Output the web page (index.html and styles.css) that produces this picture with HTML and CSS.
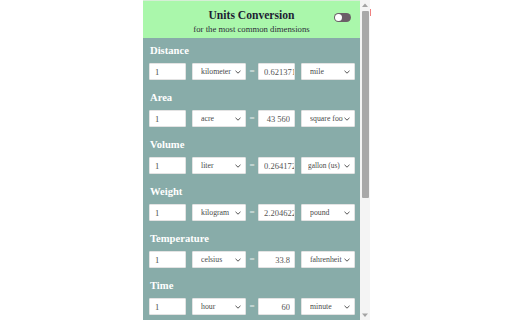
FILE: index.html
```html
<!DOCTYPE html>
<html>
<head>
<meta charset="utf-8">
<link rel="stylesheet" href="styles.css">
</head>
<body>
<div class="frame">
  <div class="panel">
    <header class="head">
      <div class="titles">
        <div class="title">Units Conversion</div>
        <div class="sub">for the most common dimensions</div>
      </div>
      <span class="toggle"><span class="knob"></span></span>
    </header>

    <section class="sec">
      <div class="lbl">Distance</div>
      <div class="row">
        <input class="num" value="1">
        <select class="sel"><option>kilometer</option></select>
        <span class="eq">=</span>
        <input class="num res long" value="0.621371192">
        <select class="sel"><option>mile</option></select>
      </div>
    </section>

    <section class="sec">
      <div class="lbl">Area</div>
      <div class="row">
        <input class="num" value="1">
        <select class="sel"><option>acre</option></select>
        <span class="eq">=</span>
        <input class="num res" value="43 560">
        <select class="sel"><option>square foot</option></select>
      </div>
    </section>

    <section class="sec">
      <div class="lbl">Volume</div>
      <div class="row">
        <input class="num" value="1">
        <select class="sel"><option>liter</option></select>
        <span class="eq">=</span>
        <input class="num res long" value="0.264172052">
        <select class="sel wide"><option>gallon (us)</option></select>
      </div>
    </section>

    <section class="sec">
      <div class="lbl">Weight</div>
      <div class="row">
        <input class="num" value="1">
        <select class="sel"><option>kilogram</option></select>
        <span class="eq">=</span>
        <input class="num res long" value="2.204622622">
        <select class="sel"><option>pound</option></select>
      </div>
    </section>

    <section class="sec">
      <div class="lbl">Temperature</div>
      <div class="row">
        <input class="num" value="1">
        <select class="sel"><option>celsius</option></select>
        <span class="eq">=</span>
        <input class="num res" value="33.8">
        <select class="sel"><option>fahrenheit</option></select>
      </div>
    </section>

    <section class="sec">
      <div class="lbl">Time</div>
      <div class="row">
        <input class="num" value="1">
        <select class="sel"><option>hour</option></select>
        <span class="eq">=</span>
        <input class="num res" value="60">
        <select class="sel"><option>minute</option></select>
      </div>
    </section>
  </div>

  <div class="sbar">
    <svg class="arr" width="10" height="10" viewBox="0 0 10 10"><path d="M2 7 L5 3.5 L8 7 Z" fill="#a3a3a3"/></svg>
    <div class="track"><div class="thumb"></div></div>
    <svg class="arr" width="10" height="10" viewBox="0 0 10 10"><path d="M2 3.5 L5 7 L8 3.5 Z" fill="#a3a3a3"/></svg>
  </div>
  <div class="edge"><span class="redmark"></span></div>
</div>
</body>
</html>
```

FILE: styles.css
```css
html, body {
  margin: 0;
  padding: 0;
  background: #ffffff;
}
body {
  font-family: "Liberation Serif", "Times New Roman", serif;
  width: 512px;
  height: 320px;
  overflow: hidden;
}
.frame {
  display: flex;
  width: 230px;
  height: 320px;
  margin-left: 143px;
}
.panel {
  width: 217px;
  height: 320px;
  background: #88aca9;
  flex: none;
  overflow: hidden;
}
.head {
  height: 38px;
  background: #aaf7ab;
  display: flex;
  align-items: center;
  position: relative;
  box-sizing: border-box;
  border-top: 1px solid #d6eed6;
}
.titles {
  flex: 1;
  text-align: center;
  padding-top: 4px;
}
.title {
  font-weight: bold;
  font-size: 11.6px;
  line-height: 14px;
  color: #1d1d33;
}
.sub {
  font-size: 8.7px;
  line-height: 12px;
  color: #2c2c3a;
}
.toggle {
  position: absolute;
  right: 9px;
  top: 12px;
  width: 17px;
  height: 9px;
  border-radius: 5px;
  background: #6b5f67;
  display: flex;
  align-items: center;
  padding-left: 1px;
  box-sizing: border-box;
}
.knob {
  width: 7px;
  height: 7px;
  border-radius: 50%;
  background: #ffffff;
}
.sec {
  padding: 5px 6px 5px;
}
.lbl {
  font-weight: bold;
  font-size: 10.6px;
  line-height: 16px;
  color: #ffffff;
  padding-left: 1px;
}
.row {
  display: flex;
  align-items: center;
  margin-top: 4px;
  height: 17px;
}
.num {
  width: 37px;
  height: 17px;
  box-sizing: border-box;
  border: 1px solid #e3e3e3;
  border-radius: 1px;
  background: #ffffff;
  font-family: "Liberation Serif", "Times New Roman", serif;
  font-size: 8.5px;
  color: #4a4a4a;
  padding: 0 4px 0 5px;
  margin: 0;
  outline: none;
  flex: none;
}
.res {
  text-align: right;
  color: #555555;
  padding: 0 4px;
}
.res.long {
  text-align: left;
  padding: 0 0 0 5px;
}
.sel {
  appearance: none;
  -webkit-appearance: none;
  width: 54px;
  height: 17px;
  box-sizing: border-box;
  border: 1px solid #e3e3e3;
  border-radius: 1px;
  background: #ffffff url("data:image/svg+xml;utf8,<svg xmlns='http://www.w3.org/2000/svg' width='8' height='6' viewBox='0 0 8 6'><path d='M1.5 1.8 L4 4.2 L6.5 1.8' fill='none' stroke='%23555' stroke-width='1'/></svg>") no-repeat right 3px center;
  font-family: "Liberation Serif", "Times New Roman", serif;
  font-size: 7.8px;
  color: #4a4a4a;
  padding: 0 11px 0 8px;
  margin: 0 0 0 6px;
  flex: none;
  outline: none;
}
.sel.wide {
  padding-left: 6px;
  font-size: 7.4px;
}
.sel option {
  font-family: "Liberation Serif", "Times New Roman", serif;
}
.eq {
  width: 12px;
  text-align: center;
  font-size: 9px;
  color: #e8efee;
  flex: none;
  line-height: 17px;
}
.sbar {
  width: 10px;
  height: 320px;
  background: #f4f4f4;
  display: flex;
  flex-direction: column;
  align-items: center;
  flex: none;
}
.arr {
  flex: none;
}
.track {
  flex: 1;
  width: 10px;
  display: flex;
  justify-content: center;
  padding-top: 1px;
}
.thumb {
  width: 7px;
  height: 187px;
  background: #a8a8a8;
  border-radius: 1px;
}
.edge {
  width: 3px;
  padding-top: 9px;
}
.redmark {
  display: block;
  width: 1px;
  height: 7px;
  background: #f08080;
}
```
